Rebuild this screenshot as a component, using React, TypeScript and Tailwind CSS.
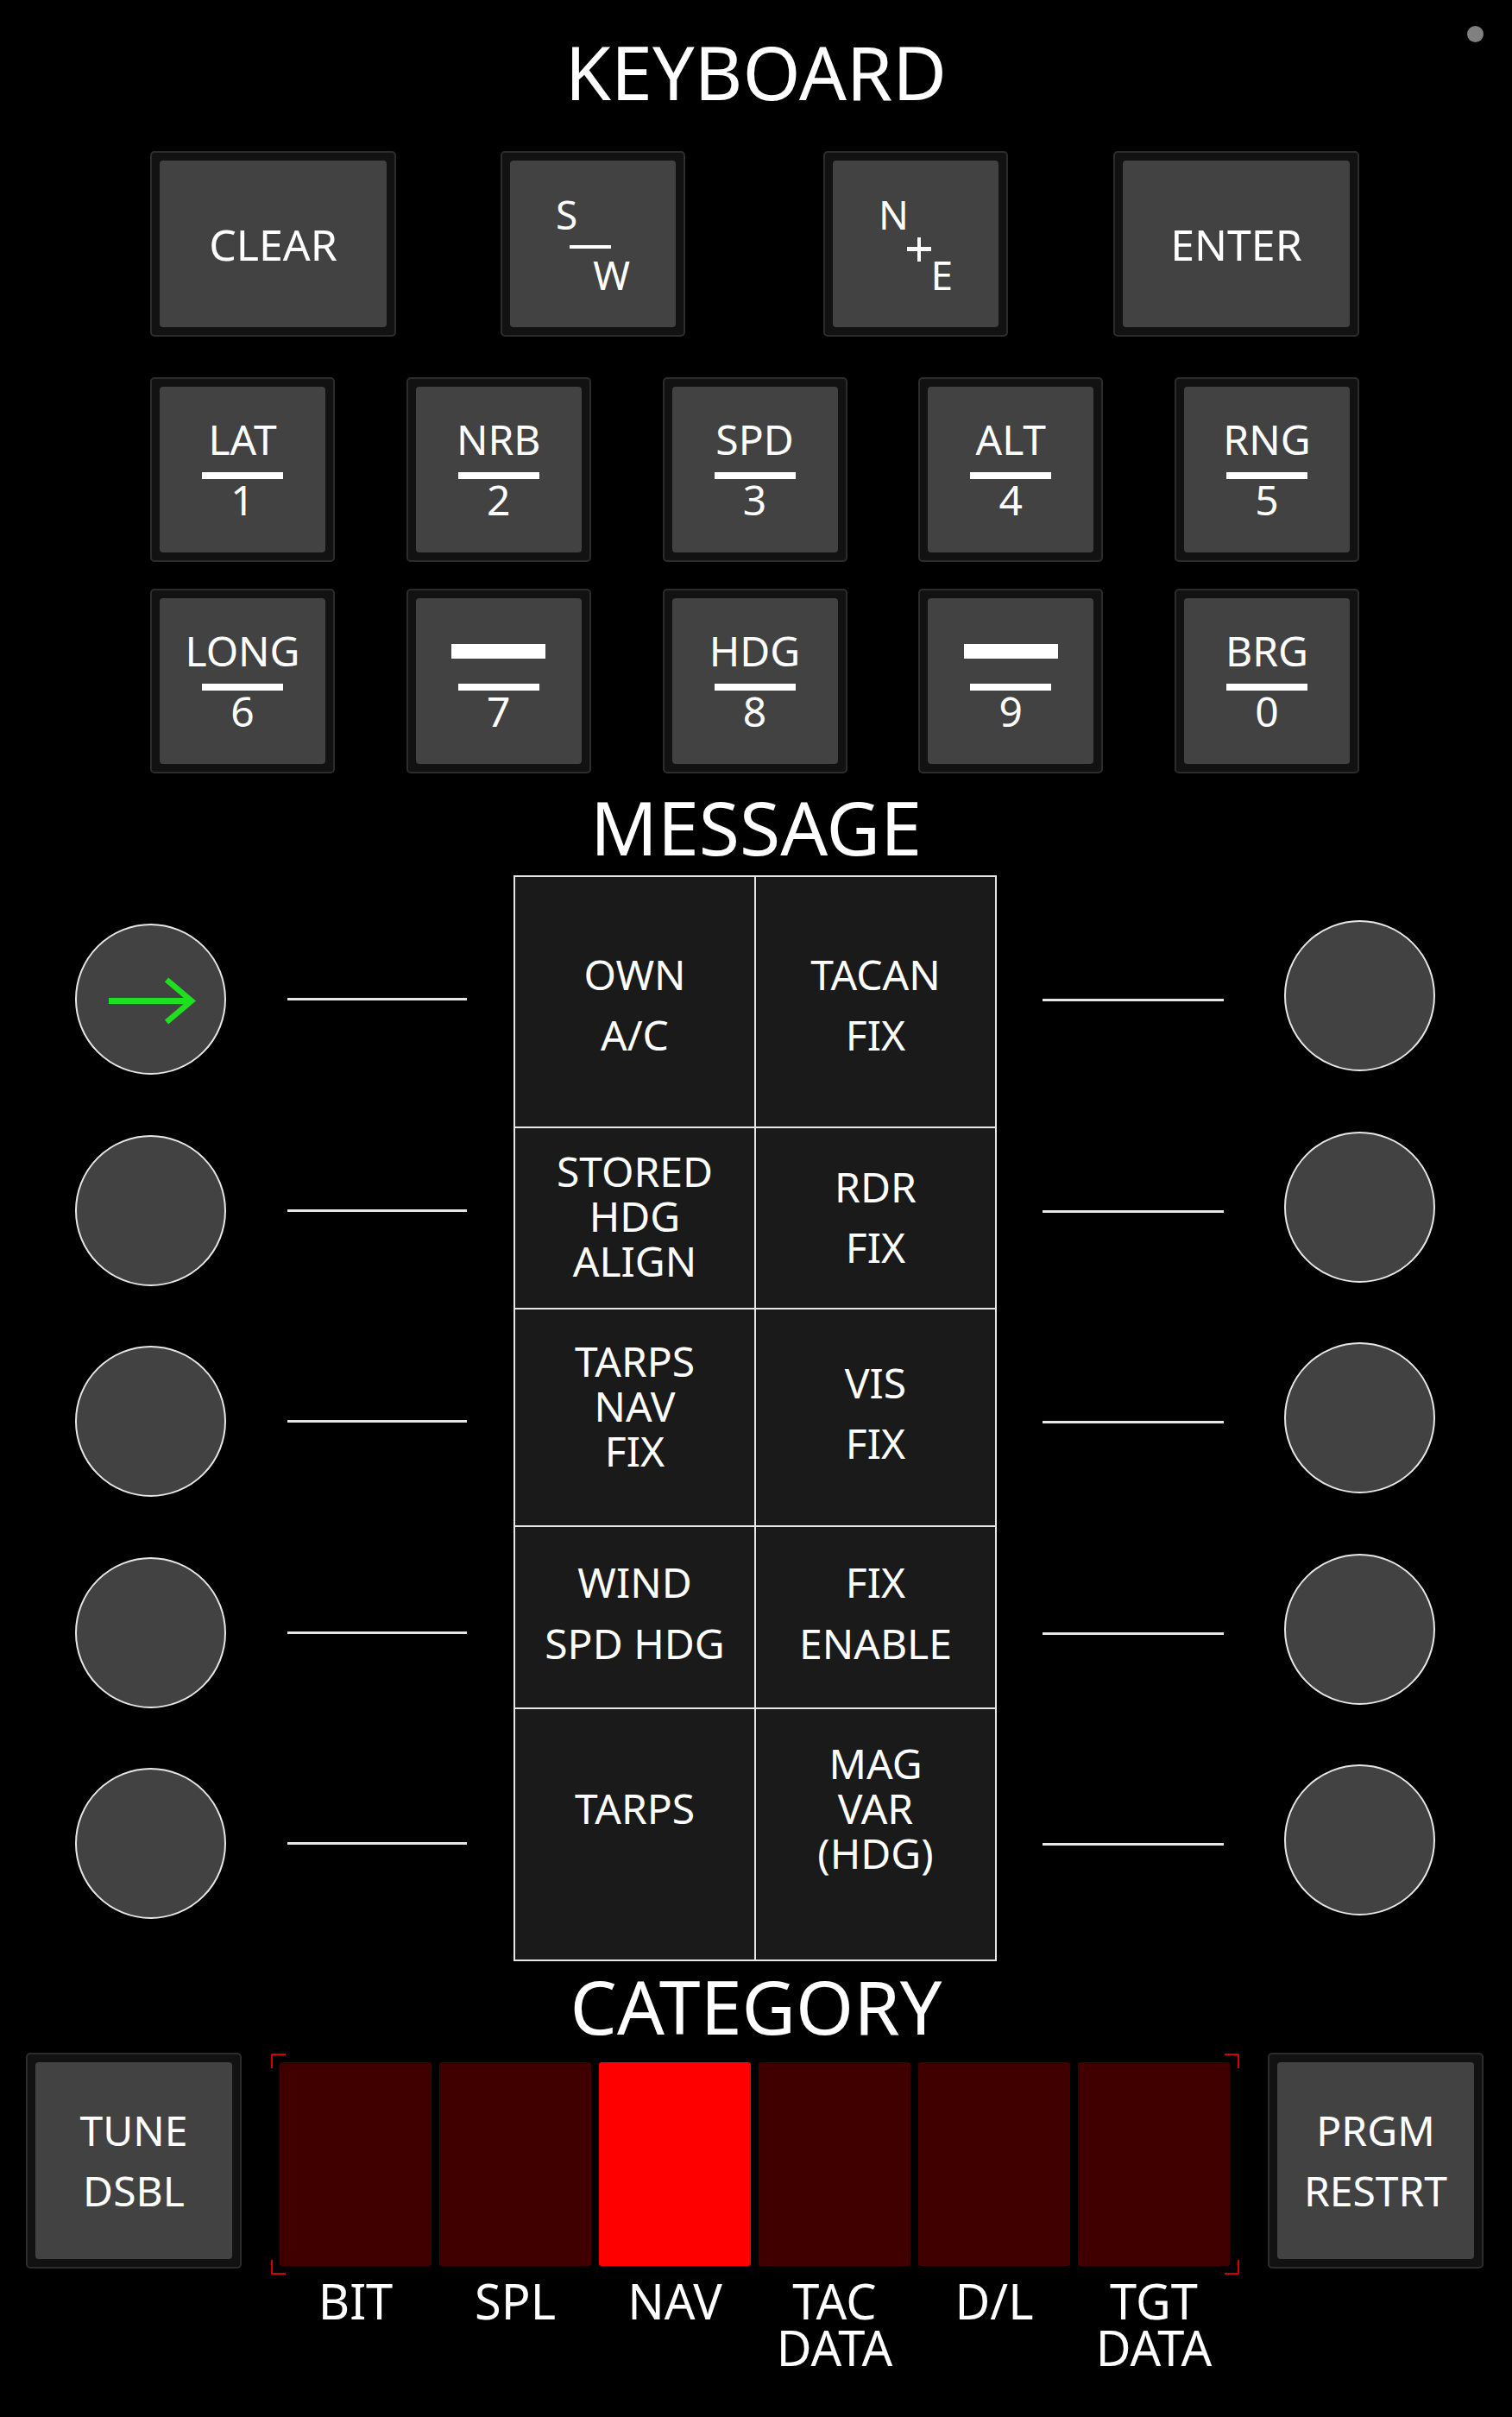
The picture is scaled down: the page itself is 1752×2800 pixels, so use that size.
import React from 'react';

interface FrameProps {
  className: string;
  children?: React.ReactNode;
}

const KeyFrame: React.FC<FrameProps> = ({ className, children }) => (
  <div className={`shrink-0 rounded-[5px] border-2 border-[#2c2c2c] bg-[#121212] p-[9px] ${className}`}>
    <div className="flex h-full w-full items-center justify-center rounded-[4px] bg-[#424242]">{children}</div>
  </div>
);

const NumKey: React.FC<{ label?: string; digit: string }> = ({ label, digit }) => (
  <KeyFrame className="h-[214px] w-[214px]">
    <div className="flex flex-col items-center">
      {label ? (
        <div className="text-[48px] leading-[48px]">{label}</div>
      ) : (
        <div className="flex h-[48px] items-center">
          <div className="h-[17px] w-[109px] bg-white" />
        </div>
      )}
      <div className="mt-[14px] h-[8px] w-[94px] bg-white" />
      <div className="text-[48px] leading-[48px]">{digit}</div>
    </div>
  </KeyFrame>
);

const Circle: React.FC<{ arrow?: boolean }> = ({ arrow }) => (
  <div className="h-[175px] w-[175px] shrink-0 rounded-full border-2 border-[#e6e6e6] bg-[#424242]">
    {arrow && (
      <svg viewBox="0 0 171 171" className="h-full w-full">
        <path d="M37 87.5 H131" stroke="#1fe01f" strokeWidth="7" fill="none" />
        <path d="M104 63 L133 87.5 L104 112" stroke="#1fe01f" strokeWidth="6.5" fill="none" />
      </svg>
    )}
  </div>
);

const messageRows = [
  {
    h: 'h-[289px]',
    cells: [
      { lines: ['OWN', 'A/C'], pt: 'pt-[78px]', lh: 'leading-[70px]' },
      { lines: ['TACAN', 'FIX'], pt: 'pt-[78px]', lh: 'leading-[70px]' },
    ],
  },
  {
    h: 'h-[210px]',
    cells: [
      { lines: ['STORED', 'HDG', 'ALIGN'], pt: 'pt-[24px]', lh: 'leading-[52px]' },
      { lines: ['RDR', 'FIX'], pt: 'pt-[33px]', lh: 'leading-[70px]' },
    ],
  },
  {
    h: 'h-[252px]',
    cells: [
      { lines: ['TARPS', 'NAV', 'FIX'], pt: 'pt-[34px]', lh: 'leading-[52px]' },
      { lines: ['VIS', 'FIX'], pt: 'pt-[50px]', lh: 'leading-[70px]' },
    ],
  },
  {
    h: 'h-[211px]',
    cells: [
      { lines: ['WIND', 'SPD HDG'], pt: 'pt-[28px]', lh: 'leading-[71px]' },
      { lines: ['FIX', 'ENABLE'], pt: 'pt-[28px]', lh: 'leading-[71px]' },
    ],
  },
  {
    h: 'h-[292px]',
    cells: [
      { lines: ['TARPS'], pt: 'pt-[89px]', lh: 'leading-[52px]' },
      { lines: ['MAG', 'VAR', '(HDG)'], pt: 'pt-[37px]', lh: 'leading-[52px]' },
    ],
  },
];

const categories = [
  { lines: ['BIT'], on: false },
  { lines: ['SPL'], on: false },
  { lines: ['NAV'], on: true },
  { lines: ['TAC', 'DATA'], on: false },
  { lines: ['D/L'], on: false },
  { lines: ['TGT', 'DATA'], on: false },
];

const App: React.FC = () => {
  return (
    <div className="relative flex h-[2800px] w-[1752px] flex-col bg-black font-['Noto_Sans',sans-serif] text-white">
      <div className="absolute right-[33px] top-[30px] h-[19px] w-[19px] rounded-full bg-[#808080]" />

      <h1 className="mt-[40px] text-center text-[86px] leading-[86px]">KEYBOARD</h1>

      {/* row 1 */}
      <div className="ml-[174px] mt-[49px] flex w-[1401px] items-start">
        <KeyFrame className="h-[215px] w-[285px]">
          <span className="text-[50px] leading-[50px]">CLEAR</span>
        </KeyFrame>
        <KeyFrame className="ml-[121px] h-[215px] w-[214px]">
          <div className="flex w-[86px] flex-col text-[46px] leading-[46px]">
            <div className="self-start">S</div>
            <div className="ml-[16px] mt-[13px] h-[4px] w-[48px] bg-white" />
            <div className="mt-[7px] self-end">W</div>
          </div>
        </KeyFrame>
        <KeyFrame className="ml-[160px] h-[215px] w-[214px]">
          <div className="flex w-[86px] flex-col text-[46px] leading-[46px]">
            <div className="self-start">N</div>
            <svg className="ml-[33px] mt-[4px]" width="28" height="28" viewBox="0 0 28 28">
              <rect x="0" y="11" width="28" height="5" fill="white" />
              <rect x="12" y="0" width="4" height="28" fill="white" />
            </svg>
            <div className="-mt-[8px] self-end">E</div>
          </div>
        </KeyFrame>
        <KeyFrame className="ml-auto h-[215px] w-[285px]">
          <span className="text-[50px] leading-[50px]">ENTER</span>
        </KeyFrame>
      </div>

      {/* row 2 */}
      <div className="ml-[174px] mt-[47px] flex w-[1401px] justify-between">
        <NumKey label="LAT" digit="1" />
        <NumKey label="NRB" digit="2" />
        <NumKey label="SPD" digit="3" />
        <NumKey label="ALT" digit="4" />
        <NumKey label="RNG" digit="5" />
      </div>

      {/* row 3 */}
      <div className="ml-[174px] mt-[31px] flex w-[1401px] justify-between">
        <NumKey label="LONG" digit="6" />
        <NumKey digit="7" />
        <NumKey label="HDG" digit="8" />
        <NumKey digit="9" />
        <NumKey label="BRG" digit="0" />
      </div>

      <h2 className="mt-[19px] text-center text-[86px] leading-[86px]">MESSAGE</h2>

      <div className="mt-[13px] flex items-start">
        <div className="ml-[87px] mt-[56px] flex flex-col gap-[69.5px]">
          {[0, 1, 2, 3, 4].map((i) => (
            <div key={i} className="flex items-center">
              <Circle arrow={i === 0} />
              <div className="ml-[71px] h-[3px] w-[208px] bg-[#e6e6e6]" />
            </div>
          ))}
        </div>

        <div className="ml-[54px] w-[560px] shrink-0 border-2 border-[#e6e6e6] bg-[#1a1a1a]">
          {messageRows.map((row, i) => (
            <div key={i} className={`flex ${row.h} ${i > 0 ? 'border-t-2 border-[#e6e6e6]' : ''}`}>
              {row.cells.map((cell, j) => (
                <div
                  key={j}
                  className={`flex flex-col items-center text-center text-[48px] ${cell.pt} ${cell.lh} ${
                    j === 0 ? 'w-[279px] border-r-2 border-[#e6e6e6]' : 'flex-1'
                  }`}
                >
                  {cell.lines.map((l) => (
                    <div key={l}>{l}</div>
                  ))}
                </div>
              ))}
            </div>
          ))}
        </div>

        {/* right side: lines sit level with the left ones, circles ride a little higher */}
        <div className="ml-[53px] mt-[52px] flex flex-col gap-[69.5px]">
          {[0, 1, 2, 3, 4].map((i) => (
            <div key={i} className="flex items-start">
              <div className="mt-[91px] h-[3px] w-[210px] bg-[#e6e6e6]" />
              <div className="ml-[70px]">
                <Circle />
              </div>
            </div>
          ))}
        </div>
      </div>

      <h2 className="mt-[9px] text-center text-[86px] leading-[86px]">CATEGORY</h2>

      <div className="mt-[11px] flex items-start pl-[30px]">
        <KeyFrame className="h-[250px] w-[250px]">
          <div className="text-center text-[48px] leading-[70px]">
            <div>TUNE</div>
            <div>DSBL</div>
          </div>
        </KeyFrame>

        <div className="ml-[34px] mt-[1px] flex w-[1122px] flex-col">
          <div className="relative h-[256px] pl-[10px] pt-[10px]">
            <div className="absolute left-0 top-0 h-[17px] w-[17px] rounded-tl-[2px] border-l-2 border-t-2 border-[#d40000]" />
            <div className="absolute bottom-0 left-0 h-[17px] w-[17px] rounded-bl-[2px] border-b-2 border-l-2 border-[#d40000]" />
            <div className="absolute right-0 top-0 h-[17px] w-[17px] rounded-tr-[2px] border-r-2 border-t-2 border-[#d40000]" />
            <div className="absolute bottom-0 right-0 h-[17px] w-[17px] rounded-br-[2px] border-b-2 border-r-2 border-[#d40000]" />
            <div className="flex gap-[9px]">
              {categories.map((c, i) => (
                <div key={i} className={`h-[236px] w-[176px] rounded-[3px] ${c.on ? 'bg-[#ff0000]' : 'bg-[#400000]'}`} />
              ))}
            </div>
          </div>
          <div className="mt-[3px] flex gap-[9px] pl-[10px]">
            {categories.map((c, i) => (
              <div key={i} className="w-[176px] text-center text-[56px] leading-[54px]">
                {c.lines.map((l) => (
                  <div key={l}>{l}</div>
                ))}
              </div>
            ))}
          </div>
        </div>

        <KeyFrame className="ml-[33px] h-[250px] w-[250px]">
          <div className="text-center text-[48px] leading-[70px]">
            <div>PRGM</div>
            <div>RESTRT</div>
          </div>
        </KeyFrame>
      </div>
    </div>
  );
};

export default App;
